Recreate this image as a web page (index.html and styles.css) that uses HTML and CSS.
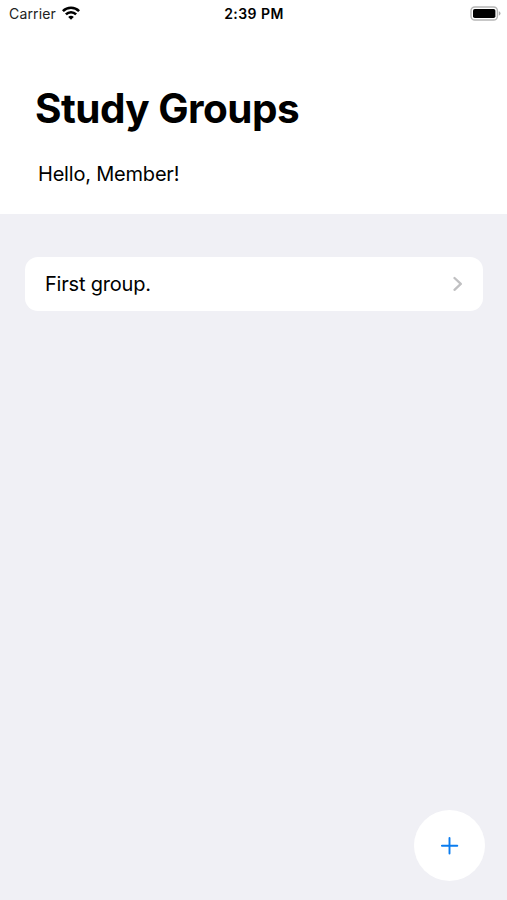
FILE: index.html
```html
<!DOCTYPE html>
<html lang="en">
<head>
<meta charset="utf-8">
<title>Study Groups</title>
<link rel="stylesheet" href="styles.css">
</head>
<body>
<header class="header">
  <div class="status">
    <div class="carrier"><span class="carrier-name">Carrier</span>
      <svg class="wifi" width="18" height="14" viewBox="0 0 18 14" fill="none" stroke="#000" stroke-width="2.6"><path d="M.9 5.1a11.5 11.5 0 0 1 16.2 0M3.9 8.4a7.2 7.2 0 0 1 10.2 0"/><path d="M9 13.8 6.2 11a3.9 3.9 0 0 1 5.6 0z" fill="#000" stroke="none"/></svg>
    </div>
    <time class="clock">2:39 PM</time>
    <svg class="battery" width="31" height="15" viewBox="0 0 31 15"><rect x="1" y="1" width="26.4" height="13" rx="3.8" fill="none" stroke="#b5b5b5" stroke-width="1.4"/><rect x="3" y="3" width="22.4" height="9" rx="1.8"/><path d="M28.8 5.3q1.7.6 1.7 2.2t-1.7 2.2z" fill="#aaa"/></svg>
  </div>
  <h1 class="title">Study Groups</h1>
  <p class="greeting">Hello, Member!</p>
</header>
<main class="content">
  <a class="group"><span class="group-name">First group.</span>
    <svg width="10" height="16" viewBox="0 0 10 16" fill="none" stroke="#c0c0c2" stroke-width="2.3" stroke-linecap="round" stroke-linejoin="round"><path d="m1.5 2 6.3 5.9-6.3 5.9"/></svg>
  </a>
  <button class="add" aria-label="Add group"><svg width="18" height="18" viewBox="0 0 18 18" fill="none" stroke="#0a7cef" stroke-width="1.9" stroke-linecap="round"><path d="M8.5 1v15.6M.9 8.7h15.4"/></svg></button>
</main>
</body>
</html>
```
FILE: styles.css
```css
* { box-sizing: border-box; }
body { margin: 0; height: 900px; display: flex; flex-direction: column; background: #f0f0f5; color: #000; font-family: Inter, "Liberation Sans", sans-serif; }
.header { height: 214px; background: #fff; }
.status { height: 27px; padding: 0 6px 0 9px; display: grid; grid-template-columns: 1fr auto 1fr; align-items: center; font-size: 14px; line-height: 27px; }
.carrier { display: flex; align-items: center; gap: 6px; }
.carrier-name { width: 47px; color: #222; letter-spacing: .15px; }
.wifi { margin-top: -2px; }
.clock { margin-left: -2px; font-weight: 600; letter-spacing: .45px; }
.battery { justify-self: end; margin-top: -1px; }
.title { margin: 57px 0 0 35px; font-size: 40.5px; line-height: 50px; font-weight: 700; letter-spacing: -.55px; white-space: nowrap; }
.greeting { margin: 27px 0 0 38px; font-size: 20px; line-height: 26px; letter-spacing: -.2px; }
.content { flex: 1; display: flex; flex-direction: column; padding: 43px 24px 19px 25px; }
.group { height: 54px; border-radius: 13px; background: #fff; display: flex; align-items: center; justify-content: space-between; padding: 0 20px; }
.group-name { font-size: 20px; letter-spacing: -.2px; }
.add { margin: auto -2px 0 auto; width: 71px; height: 71px; padding: 0; border: 0; border-radius: 50%; background: #fff; display: grid; place-items: center; }
```
